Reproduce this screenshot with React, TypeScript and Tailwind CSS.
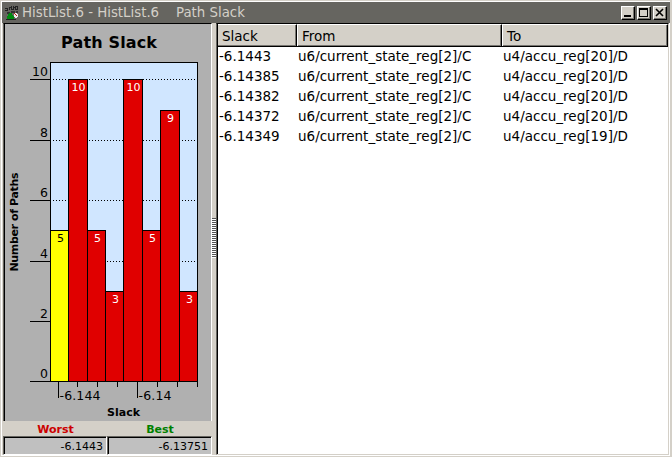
import React from "react";

const bars = [5, 10, 5, 3, 10, 5, 9, 3];
const edges = [50, 68, 87, 105, 123, 142, 160, 179, 197];
const yTicks: [number, number][] = [[10, 79], [8, 140], [6, 200], [4, 261], [2, 321], [0, 381]];
const xTicks = [77, 97, 117, 157, 177, 197];
const tops: Record<number, number> = { 10: 79, 9: 110, 5: 230, 3: 291 };

const rows = [
  ["-6.1443", "u6/current_state_reg[2]/C", "u4/accu_reg[20]/D"],
  ["-6.14385", "u6/current_state_reg[2]/C", "u4/accu_reg[20]/D"],
  ["-6.14382", "u6/current_state_reg[2]/C", "u4/accu_reg[20]/D"],
  ["-6.14372", "u6/current_state_reg[2]/C", "u4/accu_reg[20]/D"],
  ["-6.14349", "u6/current_state_reg[2]/C", "u4/accu_reg[19]/D"],
];

function AppIcon() {
  return (
    <svg width="14" height="14" viewBox="0 0 14 14" shapeRendering="crispEdges">
      <path d="M0 2.500h2M2.500 2v2M4.500 1v3M4 1.500h2M6.500 0v3M8.500 0v3M6 3.500h3M9 1.500h2M10.500 0v3M12.500 0v3M10 0.500h3M10 3.500h3M0 4.500h3" fill="none" stroke="#222" />
      <path d="M2 6h3v2H2zM6 5h4v2H6zM11 5h2v2h-2z" fill="#333" />
      <path d="M2 13v-3h1V8h1V7h3v2h1v1h1v3z" fill="#008a10" />
      <path d="M9 7h3v1h1v3h-1v1h-2v-1H9z" fill="#eee" />
      <path d="M9 7h1v1h1v1h1v1h-1V9h-1V8H9z" fill="#c01818" />
      <path d="M1 13.500h10" stroke="#222" />
    </svg>
  );
}

function WindowButton({ kind }: { kind: "min" | "max" | "close" }) {
  return (
    <div className="h-[14px] w-[14px] border border-t-white border-l-white border-r-black border-b-black bg-[#d4d0c8]">
      <svg width="12" height="12" viewBox="0 0 12 12" shapeRendering="crispEdges" className="block">
        <path d="M11.500 0v11.500H0" fill="none" stroke="#777570" />
        {kind === "min" && <path d="M2 8h7v2H2z" />}
        {kind === "max" && <path d="M1 1h9v9H1zM2 3v6h7V3z" fillRule="evenodd" />}
        {kind === "close" && <path d="M2 2l7 7M9 2l-7 7" stroke="#000" strokeWidth="1.6" shapeRendering="auto" />}
      </svg>
    </div>
  );
}

function Chart() {
  return (
    <svg width="205" height="397" viewBox="5 24 205 397" className="block">
      <text x="109" y="48" textAnchor="middle" fontSize="16" fontWeight="bold" textLength="96">Path Slack</text>
      <g shapeRendering="crispEdges" stroke="#000" strokeWidth="1">
        <rect x="50.5" y="62.5" width="147" height="319" fill="#d0e6ff" />
        {yTicks.map(([v, y]) => (
          <g key={v}>
            <path d={`M30 ${y + 0.5}H51`} />
            {v > 0 && <path d={`M53 ${y + 0.5}H196`} strokeDasharray="1 2" />}
          </g>
        ))}
        {bars.map((v, i) => (
          <rect key={i} x={edges[i] + 0.5} y={tops[v] + 0.5} width={edges[i + 1] - edges[i]} height={381 - tops[v]} fill={i === 0 ? "#ffff00" : "#e00000"} />
        ))}
        {xTicks.map((x) => <path key={x} d={`M${x + 0.5} 381V387`} />)}
        <path d="M58.5 381V398M137.5 381V398M30 381.5H198" />
      </g>
      {bars.map((v, i) => (
        <text key={i} x={edges[i] + 10.5} y={tops[v] + 12} textAnchor="middle" fontSize="11" fill={i === 0 ? "#000" : "#fff"}>{v}</text>
      ))}
      <g fontSize="12.5">
        {yTicks.map(([v, y]) => (
          <text key={v} x="48" y={y - 3} textAnchor="end">{v}</text>
        ))}
        <text x="59.500" y="400" textLength="41">-6.144</text>
        <text x="138.500" y="400" textLength="33">-6.14</text>
      </g>
      <text x="123.500" y="416" textAnchor="middle" fontSize="11" fontWeight="bold" textLength="33">Slack</text>
      <text transform="translate(18 222) rotate(-90)" textAnchor="middle" fontSize="11" fontWeight="bold" textLength="99">Number of Paths</text>
    </svg>
  );
}

function Field({ label, value, tone, width }: { label: string; value: string; tone: string; width: string }) {
  return (
    <div className={`flex flex-col ${width}`}>
      <div className={`h-[15px] pl-[1px] text-center text-[11px] leading-[18px] font-bold ${tone}`}>{label}</div>
      <div className="h-[19px] border border-t-[#666560] border-l-[#666560] border-r-white border-b-white">
        <div className="h-[17px] border-t border-l border-black bg-[#c0c0c0] pr-[3px] text-right text-[11px] leading-[17px]">{value}</div>
      </div>
    </div>
  );
}

export default function App() {
  return (
    <div className="flex h-[457px] w-[672px] flex-col overflow-hidden border border-r-2 border-[#d4d0c8] bg-[#d4d0c8] text-black [font-family:'DejaVu_Sans',sans-serif]">
      <div className="flex h-[455px] flex-col border-t border-l border-white">
        <header className="flex h-[21px] shrink-0 items-center bg-[#666560] pr-[3px] pl-[3px] text-[#d4d0c8]">
          <AppIcon />
          <div className="ml-[3px] flex-1 text-[13.33px] leading-[20px] whitespace-pre">
            <span className="inline-block w-[154px]">HistList.6 - HistList.6</span>
            <span>Path Slack</span>
          </div>
          <div className="flex gap-[2px]">
            <WindowButton kind="min" />
            <WindowButton kind="max" />
            <WindowButton kind="close" />
          </div>
        </header>
        <main className="flex min-h-0 flex-1 border-r border-b border-white pl-[1px]">
          <section className="flex w-[209px] shrink-0 flex-col">
            <div className="h-[398px] border-t border-r border-l border-t-black border-r-white border-l-[#666560] bg-[#b0b0b0]">
              <div className="border-l border-black"><Chart /></div>
            </div>
            <div className="flex">
              <Field label="Worst" value="-6.1443" tone="text-[#cc0000]" width="w-[104px]" />
              <Field label="Best" value="-6.13751" tone="text-[#008000]" width="w-[105px]" />
            </div>
          </section>
          <div className="flex w-[4px] shrink-0 flex-col justify-start pt-[195px]">
            {Array.from({ length: 20 }, (_, i) => (
              <div key={i} className="h-[2px] border-t border-[#555] bg-white" />
            ))}
          </div>
          <section className="flex min-w-0 flex-1 flex-col border border-t-black border-r-[#d4d0c8] border-b-[#d4d0c8] border-l-[#666560]">
            <div className="flex-1 border-l border-black bg-white text-[13.5px]">
              <div className="flex h-[23px] border-b border-black bg-[#d4d0c8] leading-[22px]">
                <div className="w-[79px] border-t border-r border-t-white border-r-black pl-[4px] shadow-[inset_-1px_-1px_0_#777570]">Slack</div>
                <div className="w-[205px] border-t border-r border-l border-t-white border-r-black border-l-white pl-[4px] shadow-[inset_-1px_-1px_0_#777570]">From</div>
                <div className="flex-1 border-t border-r border-l border-t-white border-r-black border-l-white pl-[4px] shadow-[inset_-1px_-1px_0_#777570]">To</div>
              </div>
              {rows.map((r) => (
                <div key={r[0]} className="flex h-5 leading-[19px]">
                  <div className="w-[79px] pl-[1px]">{r[0]}</div>
                  <div className="w-[205px] pl-[1px]">{r[1]}</div>
                  <div className="pl-[1px]">{r[2]}</div>
                </div>
              ))}
            </div>
          </section>
        </main>
      </div>
    </div>
  );
}
